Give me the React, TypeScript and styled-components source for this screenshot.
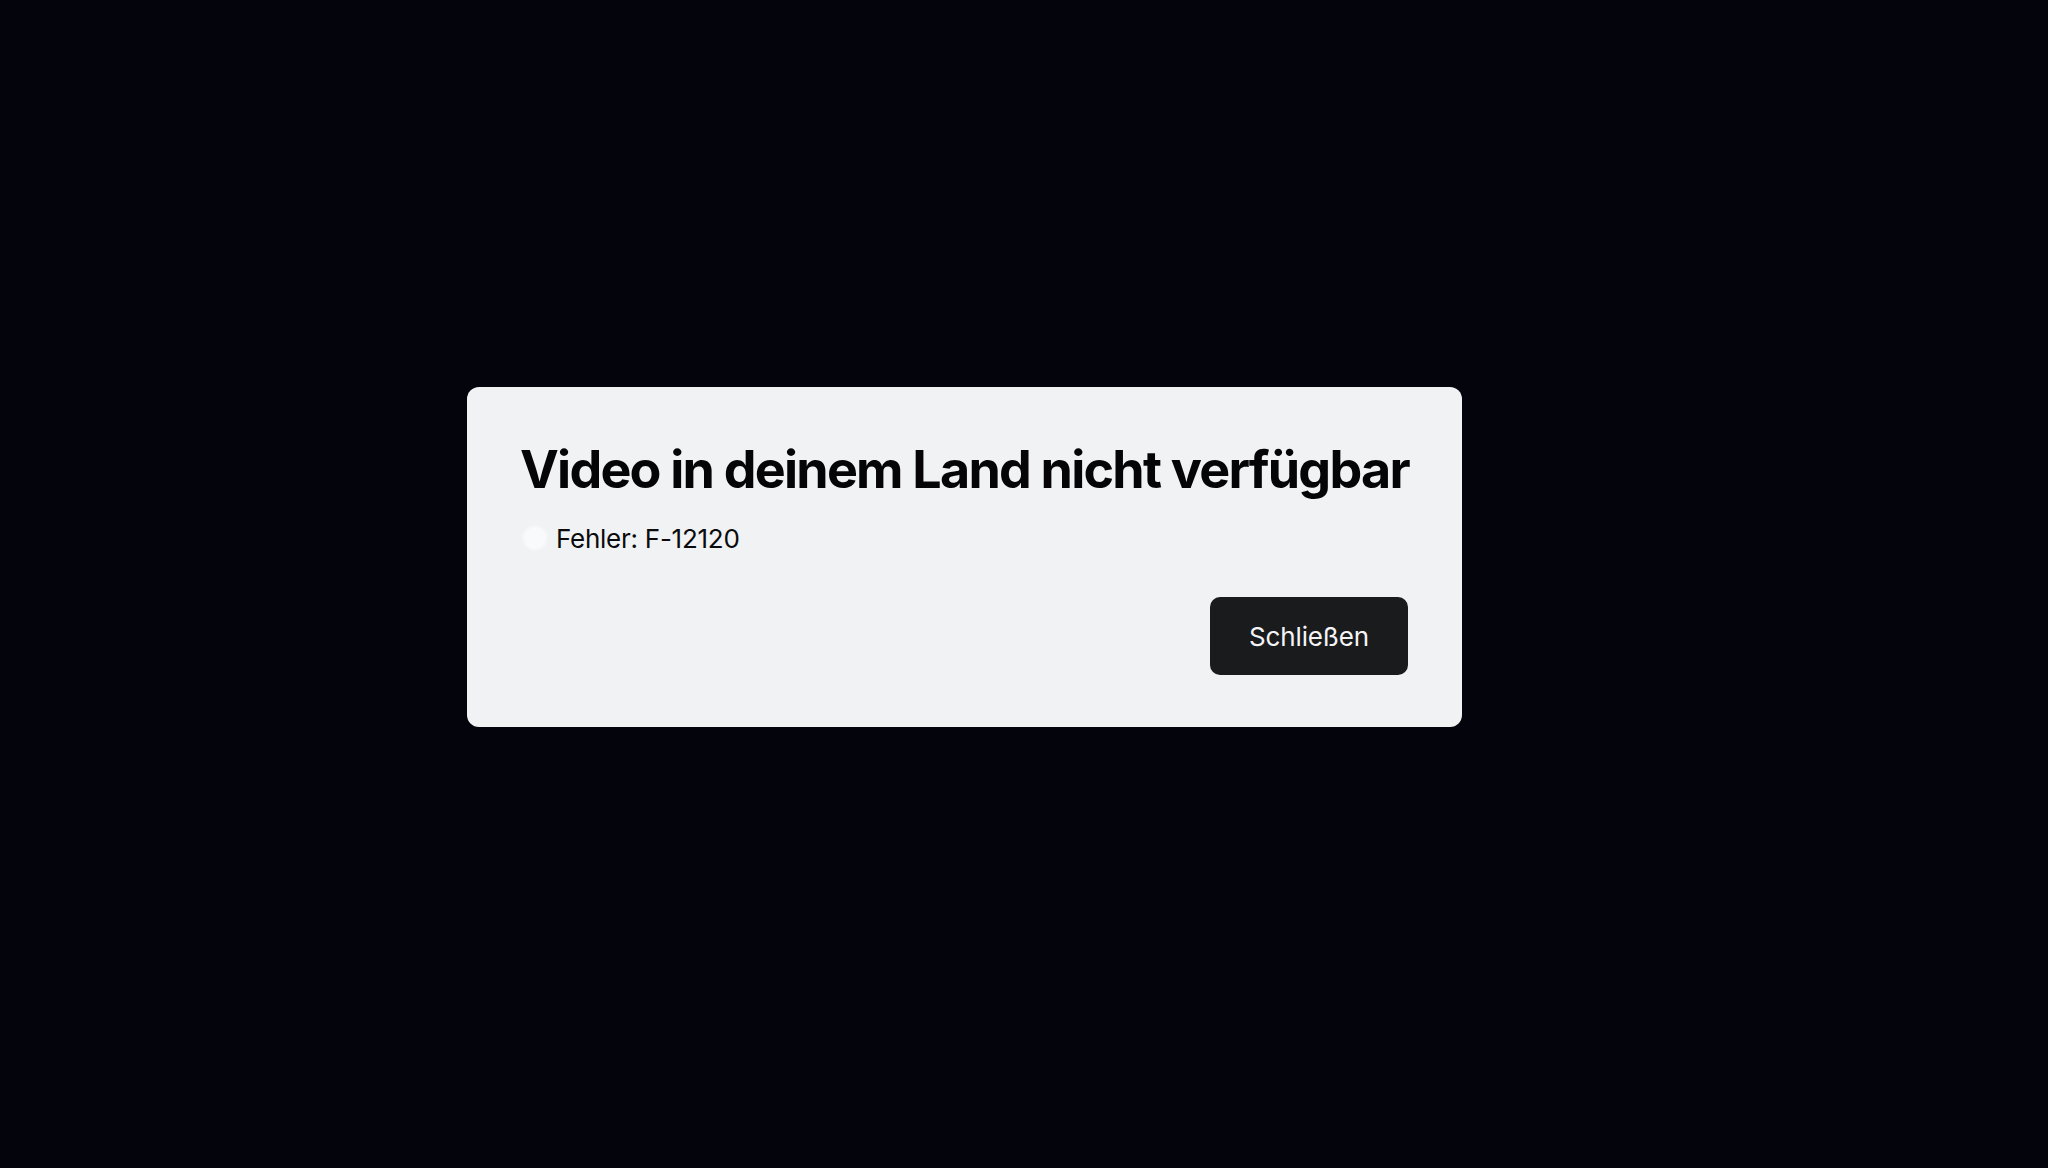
import React from "react";
import styled, { createGlobalStyle } from "styled-components";

const GlobalStyle = createGlobalStyle`
  html, body {
    margin: 0;
    padding: 0;
    background: #03040c;
  }
  body {
    font-family: Inter, "Noto Sans", "Liberation Sans", sans-serif;
    -webkit-font-smoothing: antialiased;
  }
  * { box-sizing: border-box; }
`;

const Screen = styled.main`
  min-height: 100vh;
  display: flex;
  align-items: center;
  justify-content: center;
  padding: 0 119px 54px 0;
  background: #03040c;
`;

const Dialog = styled.section`
  width: 995px;
  display: flex;
  flex-direction: column;
  padding: 52px 54px 52px 53px;
  background: #f1f2f4;
  border-radius: 12px;
`;

const Title = styled.h1`
  margin: 0;
  font-size: 52px;
  line-height: 1.2;
  font-weight: 700;
  letter-spacing: -0.034em;
  color: #050507;
  white-space: nowrap;
`;

const ErrorRow = styled.div`
  margin-top: 17px;
  display: flex;
  align-items: center;
  gap: 9px;
  font-size: 26px;
  line-height: 1.5;
  color: #0b0b0d;
  letter-spacing: -0.01em;
`;

const StatusDot = styled.span`
  width: 24px;
  height: 24px;
  margin-left: 3px;
  border-radius: 50%;
  background: #f9fafb;
  filter: blur(1.5px);
  flex: none;
`;

const Actions = styled.div`
  margin-top: 39px;
  display: flex;
  justify-content: flex-end;
`;

const CloseButton = styled.button`
  height: 78px;
  padding: 4px 39px 0;
  border: none;
  border-radius: 10px;
  background: #1a1b1d;
  color: #f4f4f6;
  font-family: inherit;
  font-size: 26px;
  line-height: 1.4;
  letter-spacing: -0.005em;
  cursor: pointer;
`;

export default function App() {
  return (
    <>
      <GlobalStyle />
      <Screen>
        <Dialog role="alertdialog" aria-labelledby="geo-title">
          <Title id="geo-title">Video in deinem Land nicht verfügbar</Title>
          <ErrorRow>
            <StatusDot />
            <span>Fehler: F-12120</span>
          </ErrorRow>
          <Actions>
            <CloseButton type="button">Schließen</CloseButton>
          </Actions>
        </Dialog>
      </Screen>
    </>
  );
}
